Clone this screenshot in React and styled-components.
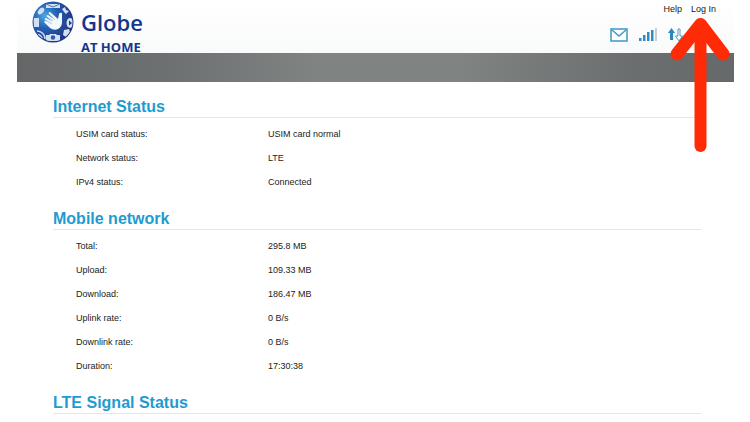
import React from 'react';
import styled, { createGlobalStyle } from 'styled-components';

const GlobalStyle = createGlobalStyle`
  body {
    margin: 0;
    background-color: #fff;
    color: #222;
    font-family: 'Liberation Sans', Arial, sans-serif;
    font-size: 9px;
  }
`;

const Page = styled.div`
  position: relative;
  padding: 0 16px 0 17px;
`;

const Header = styled.header`
  display: flex;
  justify-content: space-between;
  height: 53px;
  background: linear-gradient(#fff, #f9fafa);
`;

const Brand = styled.a`
  display: flex;
  gap: 7px;
  padding: 1px 0 0 15px;
  color: #14368f;
  font-family: 'Open Sans', sans-serif;
  text-decoration: none;
`;

const BrandText = styled.span`
  display: flex;
  flex-direction: column;
  padding-top: 6px;
`;

const BrandName = styled.span`
  font-size: 22px;
  font-weight: 600;
  line-height: 30px;
`;

const BrandTag = styled.span`
  font-size: 13px;
  font-weight: 700;
  line-height: 20px;
`;

const Tools = styled.div`
  display: flex;
  flex-direction: column;
  gap: 13px;
  padding: 3px 18px 0 0;
`;

const Links = styled.nav`
  display: flex;
  justify-content: flex-end;
  gap: 9px;
`;

const TopLink = styled.a`
  color: #222;
  line-height: 12px;
  text-decoration: none;
`;

const Indicators = styled.div`
  display: flex;
  gap: 11px;
  width: 106px;
`;

const MenuBar = styled.div`
  height: 29px;
  background: linear-gradient(90deg, #646667, #6c7071 20%, #7f8382 42%, #7f8382 62%, #6c6f6f 85%, #666969);
`;

const Content = styled.main`
  padding: 0 33px 0 36px;
`;

const Title = styled.h2`
  box-sizing: border-box;
  height: 36px;
  margin: 0 0 4px;
  padding-top: 14px;
  border-bottom: 1px solid #e6e6e6;
  color: #1f9bcf;
  font-size: 16px;
  line-height: 21px;
`;

const StatusTable = styled.table`
  width: 100%;
  border-collapse: collapse;
  table-layout: fixed;
`;

const Label = styled.th`
  width: 192px;
  height: 24px;
  padding: 0 0 0 23px;
  font-weight: 400;
  text-align: left;
`;

const Value = styled.td`
  padding: 0;
`;

const Pointer = styled.svg`
  position: absolute;
  top: 16px;
  right: 20px;
  pointer-events: none;
`;

const sections = [
  {
    title: 'Internet Status',
    rows: [
      ['USIM card status:', 'USIM card normal'],
      ['Network status:', 'LTE'],
      ['IPv4 status:', 'Connected'],
    ],
  },
  {
    title: 'Mobile network',
    rows: [
      ['Total:', '295.8 MB'],
      ['Upload:', '109.33 MB'],
      ['Download:', '186.47 MB'],
      ['Uplink rate:', '0 B/s'],
      ['Downlink rate:', '0 B/s'],
      ['Duration:', '17:30:38'],
    ],
  },
  { title: 'LTE Signal Status', rows: [] },
];

const GlobeLogo = () => (
  <svg width="42" height="42" viewBox="0 0 42 42" aria-hidden="true">
    <defs>
      <radialGradient id="ball" cx="0.3" cy="0.35" r="0.75">
        <stop offset="0" stopColor="#4aa9e2" />
        <stop offset="0.4" stopColor="#2260b4" />
        <stop offset="1" stopColor="#22307c" />
      </radialGradient>
      <clipPath id="ballEdge">
        <circle cx="21" cy="21" r="19.5" />
      </clipPath>
    </defs>
    <circle cx="21" cy="21" r="20.5" fill="url(#ball)" />
    <g clipPath="url(#ballEdge)" fill="#d3e0f2">
      <path d="M14 3h14v4H14z" />
      <path d="M14 3l7 3 7-3" fill="none" stroke="#4a76bb" />
      <path d="M1 17h6v9H2z" />
      <ellipse cx="38" cy="22" rx="3.500" ry="5" />
      <path d="M37 19.500l3 2.500-3 2.500z" fill="#1c3f92" />
      <path d="M14 34h3l1-1h6l1 1h3v6H14z" />
      <circle cx="21" cy="36.500" r="2.200" fill="#2a5cac" />
      <ellipse cx="9" cy="10" rx="2.500" ry="4" transform="rotate(40 9 10)" />
      <path d="M5 34a4 4 0 0 1 5 4M5 30a8 8 0 0 1 8 8" fill="none" stroke="#d3e0f2" strokeWidth="1.500" />
      <path d="M30 8l3-2 1 3 3 1-3 3-2-2z" />
      <path d="M31 34l1-5 5-1 1 3-4 5z" />
    </g>
    {/* open hand, fingers to the upper left, thumb to the right */}
    <path
      d="M12 21l6 6q4 3 8 1 4-2 4-7V12q-2-1-3 1l-1 5-8-7q-2 0-1 2l5 5-6-4q-2 0-1 2l5 4-6-3q-2 0-1 2l6 4-5-3q-2 0-2 1z"
      fill="#f3f8fd"
    />
    <path d="M17 13l6 6M15 16l6 4M14 19l6 4" stroke="#7ba9da" strokeWidth="0.600" />
  </svg>
);

const MailIcon = () => (
  <svg width="18" height="14" viewBox="0 0 18 14" role="img" aria-label="Messages">
    <rect x="1" y="1" width="16" height="12" fill="#fff" stroke="#3f97c6" strokeWidth="1.5" />
    <path d="M2 2l7 6 7-6" fill="none" stroke="#3f97c6" strokeWidth="1.5" />
  </svg>
);

const SignalIcon = () => (
  <svg width="18" height="14" viewBox="0 0 18 14" role="img" aria-label="Signal strength">
    <path d="M0 10h2.500v3H0zM4 7h2.500v6H4zM8 4h2.500v9H8zM12 2h2.500v11H12z" fill="#2f8dc0" />
    <path d="M16 0h2v13h-2z" fill="#c9ced6" />
  </svg>
);

const TrafficIcon = () => (
  <svg width="16" height="14" viewBox="0 0 16 14" role="img" aria-label="Data traffic">
    <path d="M3.500 0L7 5H5v7H2V5H0z" fill="#2588c0" />
    <path d="M10 1h2v7h2.500L11 13 7.500 8H10z" fill="#fff" stroke="#4c9cc8" />
  </svg>
);

const Arrow = () => (
  <Pointer width="60" height="137" viewBox="0 0 60 137" aria-hidden="true">
    <g fill="none" stroke="#ff2b06" strokeLinecap="round" strokeLinejoin="round">
      <path d="M30.500 10v120" strokeWidth="12" />
      <path d="M7 38L30.500 8.500L53 38" strokeWidth="13" />
    </g>
  </Pointer>
);

const StatusSection = ({ title, rows }) => (
  <section>
    <Title>{title}</Title>
    {rows.length > 0 && (
      <StatusTable>
        <tbody>
          {rows.map(([label, value]) => (
            <tr key={label}>
              <Label scope="row">{label}</Label>
              <Value>{value}</Value>
            </tr>
          ))}
        </tbody>
      </StatusTable>
    )}
  </section>
);

const App = () => (
  <>
    <GlobalStyle />
    <Page>
      <Header>
        <Brand href="#home">
          <GlobeLogo />
          <BrandText>
            <BrandName>Globe</BrandName>
            <BrandTag>AT HOME</BrandTag>
          </BrandText>
        </Brand>
        <Tools>
          <Links>
            <TopLink href="#help">Help</TopLink>
            <TopLink href="#login">Log In</TopLink>
          </Links>
          <Indicators>
            <MailIcon />
            <SignalIcon />
            <TrafficIcon />
          </Indicators>
        </Tools>
      </Header>
      <MenuBar />
      <Content>
        {sections.map((section) => (
          <StatusSection key={section.title} {...section} />
        ))}
      </Content>
      <Arrow />
    </Page>
  </>
);

export default App;
